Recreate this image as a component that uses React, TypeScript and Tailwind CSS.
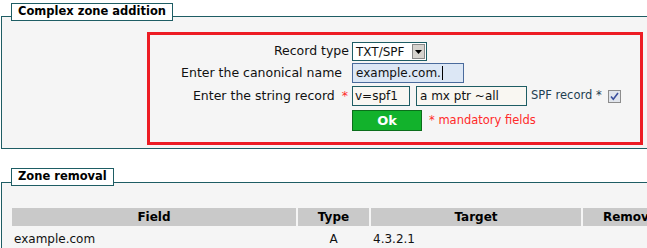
export default function App() {
  return (
    <div className="h-[248px] w-[647px] overflow-hidden bg-white font-['DejaVu_Sans',sans-serif] text-[12.5px] text-[#111]">
      {/* Complex zone addition */}
      <div className="pl-[1px] pt-[16px]">
        <div className="w-[820px] border border-[#1e5d64] bg-[#f5f5f5] pb-[3px]">
          <div className="-mt-[14px] ml-[9px] flex h-[18px] w-fit items-center border border-[#1e5d64] bg-white px-[6px] text-[11.5px] font-bold text-black">
            Complex zone addition
          </div>
          <div className="ml-[145px] mt-[11px] h-[113px] w-[496px] border-[3px] border-[#ed1c24] pt-[7px]">
            <div className="grid grid-cols-[202px_1fr]">
              <div className="flex h-[19px] items-center justify-end pr-[3px]">Record type</div>
              <div className="flex h-[19px] w-[75px] items-center border border-[#1e5d64] bg-white pl-[3px] text-[12px]">
                <span className="flex-1">TXT/SPF</span>
                <span className="mr-[1px] flex h-[15px] w-[13px] items-center justify-center border border-[#888] bg-[#d6d3ce]">
                  <svg width="7" height="4" viewBox="0 0 7 4">
                    <path d="M0 0h7L3.5 4z" fill="#000" />
                  </svg>
                </span>
              </div>

              <div className="mt-[2px] flex h-[20px] items-center justify-end pr-[10px]">Enter the canonical name</div>
              <div className="mt-[2px] flex h-[20px] w-[112px] items-center border border-[#4a6b9c] bg-[#dce7f5] pl-[3px] text-[12px]">
                example.com.<span className="ml-[1px] inline-block h-[14px] w-px bg-black" />
              </div>

              <div className="mt-[3px] flex h-[20px] items-center justify-end pr-[4px]">
                Enter the string record
                <span className="ml-[7px] text-[#ff2a2a]">*</span>
              </div>
              <div className="mt-[3px] flex h-[20px] items-center">
                <div className="flex h-[20px] w-[58px] items-center border border-[#1e5d64] bg-[#f9f7f2] pl-[2px] text-[12px]">v=spf1</div>
                <div className="ml-[6px] flex h-[20px] w-[111px] items-center border border-[#1e5d64] bg-[#f9f7f2] pl-[3px] text-[12px]">a mx ptr ~all</div>
                <span className="ml-[4px] text-[11.5px] text-[#1e3e52]">SPF record *</span>
                <span className="ml-[6px] flex h-[13px] w-[13px] items-center justify-center border border-[#8c8c8c] bg-[#e1e5ec]">
                  <svg width="9" height="9" viewBox="0 0 9 9">
                    <path d="M1 4.5l2.3 2.8L8 1" fill="none" stroke="#3b4f9c" strokeWidth="1.6" />
                  </svg>
                </span>
              </div>

              <div className="mt-[4px] h-[21px]" />
              <div className="mt-[4px] flex h-[21px] items-center">
                <div className="flex h-[21px] w-[70px] items-center justify-center border border-[#0b6e1b] bg-[#12b22c] text-[13px] font-bold text-white">
                  Ok
                </div>
                <span className="ml-[7px] text-[11.5px] text-[#ff2a2a]">* mandatory fields</span>
              </div>
            </div>
          </div>
        </div>
      </div>

      {/* Zone removal */}
      <div className="pl-[1px] pt-[33px]">
        <div className="w-[820px] border border-[#1e5d64] bg-[#f5f5f5] pb-[10px]">
          <div className="-mt-[15px] ml-[9px] flex h-[18px] w-fit items-center border border-[#1e5d64] bg-white px-[6px] text-[11.5px] font-bold text-black">
            Zone removal
          </div>
          <table className="ml-[8px] mt-[20px] table-fixed border-separate border-spacing-[2px] text-left text-[12px]">
            <thead>
              <tr className="h-[16px] bg-[#c9c9c9] text-center font-bold text-black">
                <th className="w-[284px] p-0">Field</th>
                <th className="w-[71px] p-0">Type</th>
                <th className="w-[210px] p-0">Target</th>
                <th className="w-[94px] p-0">Remove</th>
              </tr>
            </thead>
            <tbody>
              <tr className="h-[22px]">
                <td className="pl-[2px]">example.com</td>
                <td className="text-center">A</td>
                <td className="pl-[2px]">4.3.2.1</td>
                <td />
              </tr>
            </tbody>
          </table>
        </div>
      </div>
    </div>
  );
}
